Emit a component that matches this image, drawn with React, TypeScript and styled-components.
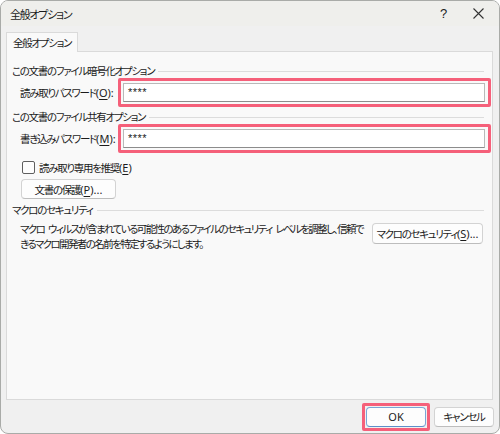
import styled, { createGlobalStyle } from "styled-components"

const GlobalStyle = createGlobalStyle`
    html, body {
        margin: 0;
        padding: 0;
        background: #ffffff;
    }
    body {
        font-family: "Noto Sans CJK JP", "Noto Sans", sans-serif;
        font-size: 10.5px;
        letter-spacing: -1.3px;
        color: #1b1b1b;
        font-feature-settings: "palt" 1;
    }
`

// "(O)" style mnemonic with the letter underlined
function Key({ children, tail = "" }: { children: string; tail?: string }) {
    return (
        <Latin>
            (<Accel>{children}</Accel>){tail}
        </Latin>
    )
}

export default function App() {
    return (
        <>
            <GlobalStyle />
            <Window>
                <TitleBar>
                    <Title>全般オプション</Title>
                    <CaptionButton>?</CaptionButton>
                    <CaptionButton>
                        <svg width="11" height="11" viewBox="0 0 11 11">
                            <path d="M0.5 0.5 L10.5 10.5 M10.5 0.5 L0.5 10.5" stroke="#333" strokeWidth="1.1" fill="none" />
                        </svg>
                    </CaptionButton>
                </TitleBar>

                <TabStrip>
                    <Tab>全般オプション</Tab>
                </TabStrip>

                <Panel>
                    <GroupHeader>この文書のファイル暗号化オプション</GroupHeader>
                    <FieldRow>
                        <FieldLabel>
                            読み取りパスワード<Key tail=":">O</Key>
                        </FieldLabel>
                        <Highlight>
                            <PasswordBox>****</PasswordBox>
                        </Highlight>
                    </FieldRow>

                    <GroupHeader $top={3}>この文書のファイル共有オプション</GroupHeader>
                    <FieldRow>
                        <FieldLabel>
                            書き込みパスワード<Key tail=":">M</Key>
                        </FieldLabel>
                        <Highlight>
                            <PasswordBox>****</PasswordBox>
                        </Highlight>
                    </FieldRow>

                    <CheckRow>
                        <CheckBox />
                        <span>
                            読み取り専用を推奨<Key>E</Key>
                        </span>
                    </CheckRow>
                    <ProtectRow>
                        <Button $width={95}>
                            文書の保護<Key tail="...">P</Key>
                        </Button>
                    </ProtectRow>

                    <GroupHeader $top={4}>マクロのセキュリティ</GroupHeader>
                    <MacroRow>
                        <MacroText>
                            マクロ{"\u2002"}ウィルスが含まれている可能性のあるファイルのセキュリティ{"\u2002"}レベルを調整し、信頼で
                            <br />
                            きるマクロ開発者の名前を特定するようにします。
                        </MacroText>
                        <MacroButton>
                            <Button $width={111} $height={21}>
                                マクロのセキュリティ<Key tail="...">S</Key>
                            </Button>
                        </MacroButton>
                    </MacroRow>
                </Panel>

                <Footer>
                    <OkHighlight>
                        <Button $width={60} $primary>
                            <Latin>OK</Latin>
                        </Button>
                    </OkHighlight>
                    <Button $width={60}>キャンセル</Button>
                </Footer>
            </Window>
        </>
    )
}

const Window = styled.div`
    width: 500px;
    height: 434px;
    box-sizing: border-box;
    border: 1px solid #a9aba8;
    border-radius: 8px;
    background: #f0f0f0;
    display: flex;
    flex-direction: column;
    overflow: hidden;
`

const TitleBar = styled.div`
    height: 25px;
    display: flex;
    align-items: center;
    padding: 0 3px 0 9px;
    background: #efefec;
`

const Title = styled.div`
    flex: 1;
    white-space: nowrap;
    font-size: 11px;
`

const CaptionButton = styled.div`
    width: 35px;
    height: 25px;
    display: flex;
    align-items: center;
    justify-content: center;
    font-size: 13px;
    letter-spacing: 0;
    font-family: "Liberation Sans", sans-serif;
    color: #222;
`

const TabStrip = styled.div`
    display: flex;
    padding: 6px 0 0 5px;
`

const Tab = styled.div`
    height: 20px;
    width: 72px;
    box-sizing: border-box;
    border: 1px solid #dadada;
    border-bottom: none;
    background: #f9f9f9;
    display: flex;
    align-items: center;
    justify-content: center;
    white-space: nowrap;
    margin-bottom: -1px;
    position: relative;
    z-index: 1;
`

const Panel = styled.div`
    flex: 1;
    margin: 0 6px 0 5px;
    border: 1px solid #dadada;
    background: #f9f9f9;
    padding: 12px 1px 0 5px;
    display: flex;
    flex-direction: column;
`

const GroupHeader = styled.div<{ $top?: number }>`
    height: 14px;
    line-height: 14px;
    margin-top: ${({ $top }) => $top ?? 0}px;
    margin-right: 7px;
    display: flex;
    align-items: center;
    gap: 4px;
    white-space: nowrap;

    &::after {
        content: "";
        flex: 1;
        height: 1px;
        background: #dcdcdc;
    }
`

const FieldRow = styled.div`
    display: flex;
    align-items: center;
    padding-left: 8px;
`

const FieldLabel = styled.div`
    width: 98px;
    white-space: nowrap;
`

const Highlight = styled.div`
    flex: 1;
    border: 3px solid #f5607a;
    border-radius: 2px;
    padding: 2px 3px 2px 2px;
`

const PasswordBox = styled.div`
    height: 19px;
    box-sizing: border-box;
    border: 1px solid #b9b9b9;
    border-bottom-color: #8c8c8c;
    background: #ffffff;
    padding-left: 4px;
    line-height: 17px;
    font-family: "Liberation Sans", sans-serif;
    font-size: 11px;
    letter-spacing: 0.5px;
`

const CheckRow = styled.div`
    margin-top: 7px;
    padding-left: 10px;
    height: 14px;
    display: flex;
    align-items: center;
    gap: 4px;
`

const CheckBox = styled.div`
    width: 13px;
    height: 13px;
    box-sizing: border-box;
    border: 1px solid #5f5f5f;
    border-radius: 2px;
    background: #fdfdfd;
`

const ProtectRow = styled.div`
    margin-top: 5px;
    padding-left: 9px;
    display: flex;
`

const Button = styled.div<{ $width: number; $height?: number; $primary?: boolean }>`
    width: ${({ $width }) => $width}px;
    height: ${({ $height }) => $height ?? 20}px;
    box-sizing: border-box;
    border: 1px solid ${({ $primary }) => ($primary ? "#7aa6d6" : "#d3d3d3")};
    border-bottom-color: ${({ $primary }) => ($primary ? "#5d8fc9" : "#bdbdbd")};
    border-radius: 4px;
    background: #fdfdfd;
    display: flex;
    align-items: center;
    justify-content: center;
    white-space: nowrap;
    flex-shrink: 0;
`

const MacroRow = styled.div`
    margin-top: 4px;
    padding-left: 8px;
    padding-right: 8px;
    display: flex;
    align-items: flex-start;
    justify-content: space-between;
`

const MacroText = styled.div`
    line-height: 15px;
    white-space: nowrap;
    letter-spacing: -1.6px;
`

const MacroButton = styled.div`
    padding-top: 2px;
`

const Footer = styled.div`
    height: 33px;
    display: flex;
    justify-content: flex-end;
    align-items: center;
    gap: 4px;
    padding-right: 5px;
`

const OkHighlight = styled.div`
    border: 3px solid #f5607a;
    border-radius: 2px;
    padding: 1px;
`

const Latin = styled.span`
    font-family: "Noto Sans", "Liberation Sans", sans-serif;
    font-size: 11px;
    letter-spacing: 0;
`

const Accel = styled.span`
    text-decoration: underline;
    text-underline-offset: 2px;
`
